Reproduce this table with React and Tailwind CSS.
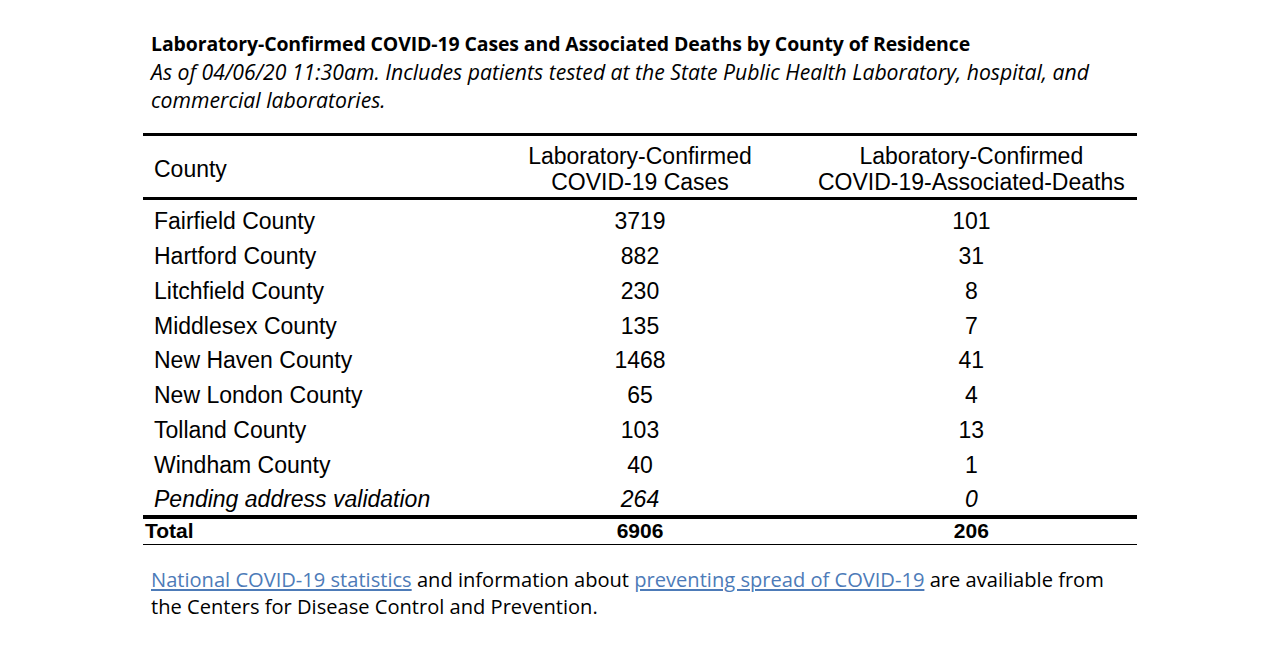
const rows = [
    { county: "Fairfield County", cases: "3719", deaths: "101" },
    { county: "Hartford County", cases: "882", deaths: "31" },
    { county: "Litchfield County", cases: "230", deaths: "8" },
    { county: "Middlesex County", cases: "135", deaths: "7" },
    { county: "New Haven County", cases: "1468", deaths: "41" },
    { county: "New London County", cases: "65", deaths: "4" },
    { county: "Tolland County", cases: "103", deaths: "13" },
    { county: "Windham County", cases: "40", deaths: "1" },
];

const App = () => {
    return (
        <div className="w-full h-[668px] bg-white text-black overflow-hidden">
            <div className="ml-[143px] w-[994px]">
                {/* Caption */}
                <div className="pt-[30px] pl-[8px] font-['Open_Sans',sans-serif] leading-[28px]">
                    <div className="font-bold text-[19.45px] tracking-[-0.1px]">
                        Laboratory-Confirmed COVID-19 Cases and Associated Deaths by County of Residence
                    </div>
                    <div className="italic text-[21.2px]">
                        As of 04/06/20 11:30am. Includes patients tested at the State Public Health Laboratory, hospital, and
                        <br />
                        commercial laboratories.
                    </div>
                </div>

                {/* Table */}
                <div className="mt-[19px] font-['Liberation_Sans',Arial,sans-serif] text-[23px]">
                    <div className="grid grid-cols-3 border-t-[3px] border-b-[3px] border-black pt-[7px] pb-[2px] leading-[26px]">
                        <div className="flex items-center pl-[11px]">County</div>
                        <div className="text-center">
                            Laboratory-Confirmed
                            <br />
                            COVID-19 Cases
                        </div>
                        <div className="text-center">
                            Laboratory-Confirmed
                            <br />
                            COVID-19-Associated-Deaths
                        </div>
                    </div>

                    <div className="pt-[2px]">
                        {rows.map((r) => (
                            <div key={r.county} className="grid grid-cols-3 h-[34.75px] pt-[4px] items-center leading-[26px]">
                                <div className="pl-[11px]">{r.county}</div>
                                <div className="text-center">{r.cases}</div>
                                <div className="text-center">{r.deaths}</div>
                            </div>
                        ))}
                        <div className="grid grid-cols-3 h-[34.75px] pt-[4px] items-center leading-[26px] italic">
                            <div className="pl-[11px]">Pending address validation</div>
                            <div className="text-center">264</div>
                            <div className="text-center">0</div>
                        </div>
                    </div>

                    <div className="grid grid-cols-3 h-[30px] items-center border-t-4 border-b-[1.5px] border-black font-bold text-[21px] leading-[24px]">
                        <div className="pl-[2px]">Total</div>
                        <div className="text-center">6906</div>
                        <div className="text-center">206</div>
                    </div>
                </div>

                {/* Footnote */}
                <div className="mt-[21px] pl-[8px] font-['Open_Sans',sans-serif] text-[20.1px] leading-[27px]">
                    <a href="#" className="text-[#4d7bb8] underline underline-offset-2">National COVID-19 statistics</a>
                    {" "}and information about{" "}
                    <a href="#" className="text-[#4d7bb8] underline underline-offset-2">preventing spread of COVID-19</a>
                    {" "}are availiable from
                    <br />
                    the Centers for Disease Control and Prevention.
                </div>
            </div>
        </div>
    );
};

export default App;
